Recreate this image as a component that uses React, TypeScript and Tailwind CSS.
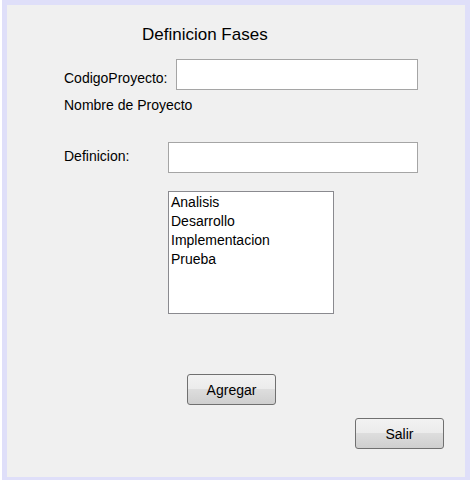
export default function App() {
  const fases = ["Analisis", "Desarrollo", "Implementacion", "Prueba"];

  return (
    <div className="min-h-[480px] w-[473px] bg-white font-['Liberation_Sans',Arial,sans-serif] text-black">
      <div className="ml-[2px] h-[480px] w-[468px] border-[#dfdff9] border-t-[5px] border-l-[5px] border-r-[5px] border-b-[3px] bg-[#f0f0f0]">
        {/* titulo */}
        <h1 className="ml-[135px] mt-[20px] text-[17px] leading-[20px] font-normal">
          Definicion Fases
        </h1>

        {/* codigo proyecto */}
        <div className="mt-[14px] ml-[57px] flex h-[31px]">
          <label className="mt-[11px] w-[112px] text-[14px] leading-[16px]">
            CodigoProyecto:
          </label>
          <input
            type="text"
            className="h-[31px] w-[242px] border border-[#a5a5a5] bg-white outline-none"
          />
        </div>

        <p className="mt-[7px] ml-[57px] text-[14px] leading-[16px]">
          Nombre de Proyecto
        </p>

        {/* definicion */}
        <div className="mt-[29px] ml-[57px] flex h-[31px]">
          <label className="mt-[6px] w-[104px] text-[14px] leading-[16px]">
            Definicion:
          </label>
          <input
            type="text"
            className="h-[31px] w-[250px] border border-[#a5a5a5] bg-white outline-none"
          />
        </div>

        {/* lista de fases */}
        <ul className="mt-[18px] ml-[161px] h-[123px] w-[166px] border border-[#8a8a8f] bg-white pt-[1px] pl-[2px] text-[14px] leading-[19px]">
          {fases.map((f) => (
            <li key={f}>{f}</li>
          ))}
        </ul>

        <button className="mt-[60px] ml-[180px] block h-[31px] w-[89px] rounded-[3px] border border-[#707070] bg-[linear-gradient(to_bottom,#f2f2f2_0%,#ebebeb_50%,#dddddd_50%,#cfcfcf_100%)] text-[14px] leading-[16px]">
          Agregar
        </button>

        <button className="mt-[13px] ml-[348px] block h-[31px] w-[89px] rounded-[3px] border border-[#707070] bg-[linear-gradient(to_bottom,#f2f2f2_0%,#ebebeb_50%,#dddddd_50%,#cfcfcf_100%)] text-[14px] leading-[16px]">
          Salir
        </button>
      </div>
    </div>
  );
}
